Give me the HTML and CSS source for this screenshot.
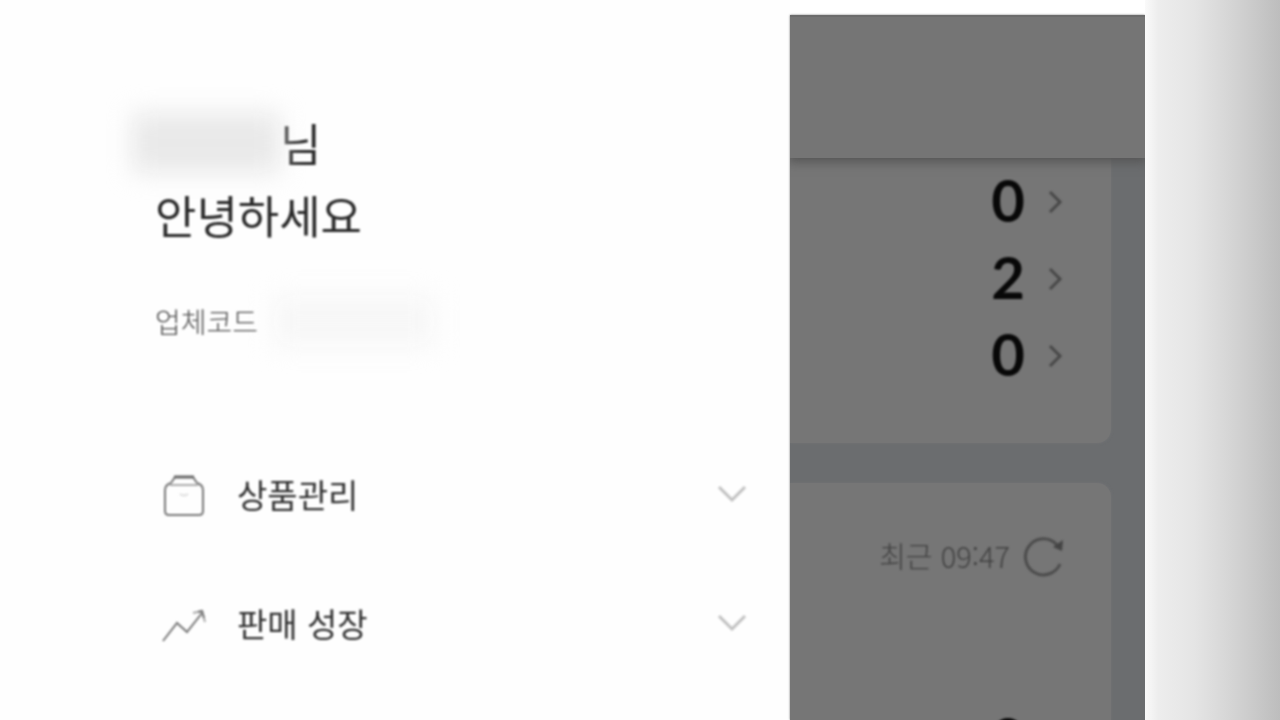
FILE: index.html
```html
<!DOCTYPE html>
<html lang="ko">
<head>
<meta charset="utf-8">
<meta name="viewport" content="width=device-width, initial-scale=1">
<title>판매자 메뉴</title>
<link rel="stylesheet" href="styles.css">
</head>
<body>
<div class="screen">
  <aside class="drawer">
    <header class="profile">
      <h1 class="greeting">
        <span class="name-line"><span class="masked-name"></span>님</span>
        <span>안녕하세요</span>
      </h1>
      <p class="vendor">업체코드<span class="masked-code"></span></p>
    </header>
    <nav class="menu">
      <button class="menu-item" type="button">
        <svg class="menu-icon" viewBox="0 0 48 48" aria-hidden="true">
          <path d="M11 11 L15 5 H33 L37 11" />
          <path class="lid" d="M14 5 H34" />
          <path class="soft" d="M10 13 H38" />
          <path d="M11 11 Q5 13 5 18 V39 Q5 43 9 43 H39 Q43 43 43 39 V18 Q43 13 37 11" />
          <path class="faint" d="M20 22 Q24 25 28 22" />
        </svg>
        <span class="menu-label">상품관리</span>
        <svg class="chevron" viewBox="0 0 30 18" aria-hidden="true"><path d="M2 2 L15 15 L28 2" /></svg>
      </button>
      <button class="menu-item" type="button">
        <svg class="menu-icon" viewBox="0 0 48 48" aria-hidden="true">
          <path d="M3 40 L17 22 L27 31 L42 12" />
          <path class="soft" d="M33 12 L42 10 L45 21" />
          <path d="M38 11 L42 10 L44 17" />
        </svg>
        <span class="menu-label">판매 성장</span>
        <svg class="chevron" viewBox="0 0 30 18" aria-hidden="true"><path d="M2 2 L15 15 L28 2" /></svg>
      </button>
    </nav>
  </aside>
  <main class="dimmed">
    <div class="topbar"></div>
    <section class="card card-counts">
      <a class="count" href="#">0<svg class="arrow" viewBox="0 0 16 24" aria-hidden="true"><path d="M3 2 L13 12 L3 22" /></svg></a>
      <a class="count" href="#">2<svg class="arrow" viewBox="0 0 16 24" aria-hidden="true"><path d="M3 2 L13 12 L3 22" /></svg></a>
      <a class="count" href="#">0<svg class="arrow" viewBox="0 0 16 24" aria-hidden="true"><path d="M3 2 L13 12 L3 22" /></svg></a>
    </section>
    <section class="card card-recent">
      <div class="recent">
        <span>최근 09:47</span>
        <button class="refresh" type="button" aria-label="새로고침">
          <svg viewBox="0 0 44 44" aria-hidden="true">
            <path d="M38 31 A18 18 0 1 1 35 12" />
            <path class="tip" d="M41 7 L40 18 L31 14 Z" />
          </svg>
        </button>
      </div>
      <a class="count" href="#">0<svg class="arrow" viewBox="0 0 16 24" aria-hidden="true"><path d="M3 2 L13 12 L3 22" /></svg></a>
    </section>
  </main>
  <div class="edge"></div>
</div>
</body>
</html>
```
FILE: styles.css
```css
* {
  box-sizing: border-box;
}

body {
  margin: 0;
  background: #fff;
  font-family: "Noto Sans CJK KR", sans-serif;
}

button {
  border: 0;
  padding: 0;
  background: none;
  color: inherit;
  font: inherit;
  text-align: left;
}

svg {
  display: block;
  fill: none;
}

.screen {
  display: grid;
  grid-template-columns: 158fr 71fr 27fr;
  height: 100vh;
  overflow: hidden;
}

.drawer {
  padding: 107px 43px 0 155px;
  background: #fefefe;
}

.greeting {
  display: flex;
  flex-direction: column;
  margin: 0;
  color: #282828;
  font-size: 45px;
  font-weight: 400;
  line-height: 72px;
  filter: blur(1px);
}

.name-line {
  display: flex;
}

.masked-name {
  width: 148px;
  height: 60px;
  margin: 6px 0 0 -23px;
  background: #e9e9e9;
  filter: blur(12px);
}

.vendor {
  display: flex;
  align-items: center;
  height: 64px;
  margin: 38px 0 0;
  color: #4c4c4c;
  font-size: 28px;
  font-weight: 300;
  filter: blur(1px);
}

.masked-code {
  width: 160px;
  height: 52px;
  margin-left: 16px;
  background: #f7f7f7;
  filter: blur(12px);
}

.menu {
  padding-top: 76px;
}

.menu-item {
  display: flex;
  align-items: center;
  width: 100%;
  height: 129px;
  color: #303030;
  font-size: 33px;
  line-height: 48px;
  filter: blur(1px);
}

.menu-icon {
  width: 48px;
  height: 48px;
  margin: 4px 29px 0 5px;
  stroke: #777;
  stroke-width: 2;
}

.soft {
  stroke: #aaa;
}

.faint {
  stroke: #ddd;
}

.lid {
  stroke: #666;
  stroke-width: 3;
}

.menu-label {
  flex: 1;
}

.chevron {
  width: 30px;
  height: 18px;
  stroke: #c0c0c0;
  stroke-width: 3;
}

.dimmed {
  display: flex;
  flex-direction: column;
  margin-top: 15px;
  overflow: hidden;
  background: #6b6d6f;
  box-shadow: 0 0 2px #777;
}

.topbar {
  z-index: 1;
  flex: none;
  height: 143px;
  border-top: 2px solid #6c6c6c;
  background: #757575;
  box-shadow: 0 2px 10px 2px #555;
}

.card {
  flex: none;
  margin-right: 34px;
  background: #767676;
  box-shadow: 0 0 3px #747577;
}

.card-counts {
  height: 285px;
  padding-top: 3px;
  border-bottom-right-radius: 14px;
}

.count {
  display: flex;
  align-items: center;
  justify-content: flex-end;
  gap: 22px;
  height: 77px;
  padding-right: 48px;
  color: #080808;
  font-family: Lato, sans-serif;
  font-size: 58px;
  font-weight: 700;
  line-height: 77px;
  text-decoration: none;
  filter: blur(1px);
}

.arrow {
  width: 16px;
  height: 24px;
  margin-top: 4px;
  stroke: #484848;
  stroke-width: 3;
}

.card-recent {
  height: 360px;
  margin-top: 40px;
  padding-top: 48px;
  border-top-right-radius: 14px;
}

.recent {
  display: flex;
  align-items: center;
  justify-content: flex-end;
  gap: 12px;
  height: 48px;
  margin-bottom: 120px;
  padding-right: 45px;
  color: #404040;
  font-size: 29px;
  font-weight: 300;
  line-height: 44px;
  filter: blur(1px);
}

.refresh {
  width: 44px;
  height: 44px;
  stroke: #4c4c4c;
  stroke-width: 3;
}

.tip {
  fill: #444;
  stroke: none;
}

.edge {
  background: linear-gradient(90deg, #fafafa 0, #ededed 10%, #e5e5e5 36%, #d7d7d7 60%, #c9c9c9 82%, #bdbdbd 100%);
}
```
